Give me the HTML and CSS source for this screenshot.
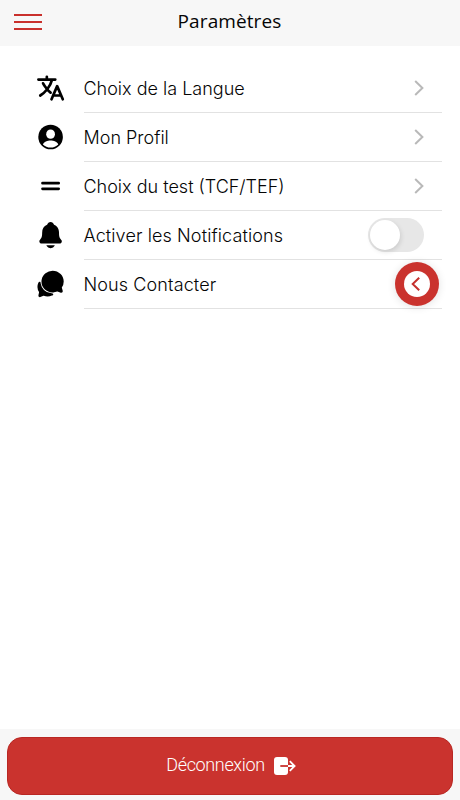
FILE: index.html
```html
<!DOCTYPE html>
<html lang="fr">
<head>
    <meta charset="UTF-8">
    <meta name="viewport" content="width=device-width, initial-scale=1.0">
    <title>Paramètres</title>
    <link rel="stylesheet" href="styles.css">
</head>
<body>

    <header class="header">
        <button class="menu-button" aria-label="Menu">
            <span></span>
            <span></span>
            <span></span>
        </button>
        <h1>Paramètres</h1>
    </header>

    <main class="settings">
        <div class="item">
            <svg class="icon" viewBox="-10 0 512 512">
                <path class="line" d="M48 112h288M192 64v48M272 448l96-224 96 224M301.5 384h133M281.3 112S257 206 199 277 80 384 80 384M256 336s-35-27-72-75-56-85-56-85"/>
            </svg>
            <div class="item-inner">
                <span>Choix de la Langue</span>
                <svg class="chevron" viewBox="0 0 10 16"><path d="M1.2 1l7.2 7-7.2 7"/></svg>
            </div>
        </div>
        <div class="item">
            <svg class="icon" viewBox="-10 0 512 512">
                <circle cx="256" cy="256" r="210"/>
                <ellipse class="cutout" cx="256" cy="207" rx="75" ry="80"/>
                <path class="cutout" d="M256 436c-51 0-97-20-131-54 15-44 79-67 131-67s116 23 131 67c-34 34-80 54-131 54z"/>
            </svg>
            <div class="item-inner">
                <span>Mon Profil</span>
                <svg class="chevron" viewBox="0 0 10 16"><path d="M1.2 1l7.2 7-7.2 7"/></svg>
            </div>
        </div>
        <div class="item">
            <svg class="icon" viewBox="-10 0 512 512">
                <path class="line" d="M118 304h276M118 208h276"/>
            </svg>
            <div class="item-inner">
                <span>Choix du test (TCF/TEF)</span>
                <svg class="chevron" viewBox="0 0 10 16"><path d="M1.2 1l7.2 7-7.2 7"/></svg>
            </div>
        </div>
        <div class="item">
            <svg class="icon" viewBox="-10 0 512 512">
                <path d="M440.08 341.31c-1.66-2-3.29-4-4.89-5.93-22-26.61-35.31-42.67-35.31-118 0-39-9.33-71-27.72-95-13.56-17.73-31.89-31.18-56.05-41.12a3 3 0 01-.82-.67C306.6 51.49 282.82 32 256 32s-50.59 19.49-59.28 48.56a3.13 3.13 0 01-.81.65c-56.38 23.21-83.78 67.74-83.78 136.14 0 75.36-13.29 91.42-35.31 118-1.6 1.93-3.23 3.89-4.89 5.93a35.16 35.16 0 00-4.65 37.62c6.17 13 19.32 21.07 34.33 21.07H410.5c14.94 0 28-8.06 34.19-21a35.17 35.17 0 00-4.61-37.66zM256 480a80.06 80.06 0 0070.44-42.13 4 4 0 00-3.54-5.87H189.12a4 4 0 00-3.55 5.87A80.06 80.06 0 00256 480z"/>
            </svg>
            <div class="item-inner">
                <span class="wide">Activer les Notifications</span>
                <span class="toggle"><span class="knob"></span></span>
            </div>
        </div>
        <div class="item">
            <svg class="icon" viewBox="-10 0 512 512">
                <path d="M439.9 405.6a26.77 26.77 0 01-9.59-2l-56.78-20.13-.42-.17a9.88 9.88 0 00-3.91-.76 10.32 10.32 0 00-3.62.66c-1.38.52-13.81 5.19-26.85 8.77-7.07 1.94-31.68 8.27-51.43 8.27-50.48 0-97.68-19.4-132.89-54.63A183.38 183.38 0 01100.3 215.1a175.9 175.9 0 014.06-37.58c8.79-40.62 32.07-77.57 65.55-104A194.76 194.76 0 01290.3 30.5c52.21 0 100.86 20 137 56.18 34.16 34.27 52.88 79.33 52.73 126.87a177.86 177.86 0 01-30.3 99.15l-.19.28-.74 1c-.17.23-.34.45-.5.68l-.15.27a21.63 21.63 0 00-1.08 2.09l15.74 55.94a26.42 26.42 0 011.12 7.11 24 24 0 01-24.03 25.53z"/>
                <path d="M299.87 425.39a15.74 15.74 0 00-10.29-8.1c-5.78-1.53-12.52-1.27-17.67-1.65a201.78 201.78 0 01-128.82-58.75A199.21 199.21 0 0186.4 244.16C85 234.42 85 232 85 232a16 16 0 00-28-10.58s-7.88 8.58-11.6 17.19a162.09 162.09 0 0011 150.06C59 393 59 395 58.42 399.5c-2.73 14.11-7.51 39-10 51.91a24 24 0 008 22.92l.46.39A24.34 24.34 0 0072 480a23.42 23.42 0 009-1.79l53.51-20.65a8.05 8.05 0 015.72 0c21.07 7.84 43 12 63.78 12a176 176 0 0074.91-16.66c5.46-2.56 14-5.34 19-11.12a15 15 0 001.95-16.39z"/>
            </svg>
            <div class="item-inner">
                <span class="wide">Nous Contacter</span>
                <button class="fab" aria-label="Ouvrir">
                    <svg viewBox="0 0 26 26">
                        <circle cx="13" cy="13" r="13"/>
                        <path d="M15.2 6.7L8.7 13l6.5 6.3"/>
                    </svg>
                </button>
            </div>
        </div>
    </main>

    <footer class="footer">
        <button class="logout">
            <span>Déconnexion</span>
            <svg viewBox="0 0 22 18">
                <rect width="14" height="18" rx="3"/>
                <path class="shaft-in" d="M6.3 9h7.7"/>
                <path d="M14 9h6.5M15.8 4.2l4.8 4.8-4.8 4.8"/>
            </svg>
        </button>
    </footer>

</body>
</html>
```
FILE: styles.css
```css
* { box-sizing: border-box; }
body { margin: 0; height: 100vh; display: flex; flex-direction: column; background: #fff; color: #050505; font-family: Inter, "Liberation Sans", sans-serif; }
button { border: 0; padding: 0; font: inherit; }

.header { height: 46px; padding: 0 15px 0 14px; display: grid; grid-template-columns: 28px 1fr 28px; align-items: center; background: #f7f7f7; }
.header h1 { margin: 0; padding-bottom: 5px; text-align: center; font-family: "Open Sans", sans-serif; font-size: 19px; font-weight: 400; letter-spacing: 0.1px; }
.menu-button { display: flex; flex-direction: column; gap: 5px; padding-bottom: 2px; background: none; }
.menu-button span { height: 2px; background: #c9302c; }

.settings { flex: 1; padding: 18px 18px 0 35px; }
.item { height: 49px; display: flex; align-items: center; gap: 18.5px; }
.icon { width: 30px; height: 30px; margin-top: -1px; fill: #000; }
.line { fill: none; stroke: #000; stroke-width: 46; stroke-linecap: round; stroke-linejoin: round; }
.cutout { fill: #fff; }
.item-inner { flex: 1; height: 49px; padding-right: 18px; display: flex; align-items: center; justify-content: space-between; border-bottom: 1px solid #e2e2e2; font-size: 18px; font-weight: 300; }
.wide { letter-spacing: 0.11px; }
.chevron { width: 10px; height: 16px; margin-right: 0.5px; fill: none; stroke: #b9b9b9; stroke-width: 2; }

.toggle { width: 56px; height: 34px; padding: 2px; border-radius: 17px; background: #e7e7e7; }
.knob { display: block; width: 30px; height: 30px; border-radius: 50%; background: #fff; box-shadow: 1px 2px 5px rgba(0, 0, 0, 0.12); }

.fab { width: 44px; height: 44px; margin-right: -14.5px; display: flex; align-items: center; justify-content: center; border-radius: 50%; background: #ca332e; box-shadow: 0 1px 8px rgba(0, 0, 0, 0.12); }
.fab svg { width: 26px; height: 26px; fill: #fff; }
.fab path { fill: none; stroke: #c5302d; stroke-width: 2; }

.footer { height: 71px; padding: 8px 7px 5px; background: #f7f7f7; }
.logout { width: 100%; height: 58px; padding: 0 0 1px 2px; display: flex; align-items: center; justify-content: center; gap: 9px; border: 1px solid #b92723; border-radius: 15px; background: #ca332e; color: #fff; font-family: Roboto, sans-serif; font-size: 18px; font-weight: 300; letter-spacing: -0.35px; }
.logout span { padding-bottom: 2px; }
.logout svg { width: 22px; height: 18px; fill: #fff; }
.logout path { fill: none; stroke: #fff; stroke-width: 1.8; }
.logout .shaft-in { stroke: #ca332e; }
```
